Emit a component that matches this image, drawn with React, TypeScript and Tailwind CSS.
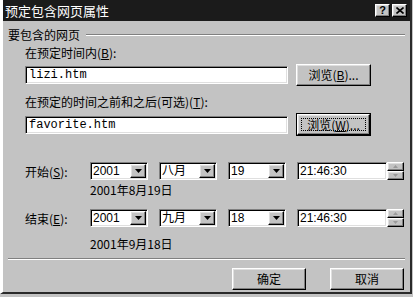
import type { ReactNode } from 'react'

const sunken =
  'border border-t-[#808080] border-l-[#808080] border-b-white border-r-white shadow-[inset_1px_1px_0_#000,inset_-1px_-1px_0_#dfdfdf]'
const raised =
  'border border-t-white border-l-white border-b-black border-r-black shadow-[inset_-1px_-1px_0_#808080,inset_1px_1px_0_#dfdfdf]'

function Label({ children, className = '' }: { children: ReactNode; className?: string }) {
  return <div className={`h-[13px] whitespace-nowrap text-[12px] leading-[13px] ${className}`}>{children}</div>
}

function DropArrow() {
  return (
    <svg width="7" height="4" viewBox="0 0 7 4">
      <path d="M0 0h7L3.5 4z" fill="#000" />
    </svg>
  )
}

function Combo({ value }: { value: string }) {
  return (
    <div className={`flex h-[18px] w-[58px] items-center bg-white ${sunken}`}>
      <span className="flex-1 pl-[2px] font-['Liberation_Sans','Noto_Sans_CJK_SC',sans-serif] text-[12px] leading-none">
        {value}
      </span>
      <div className={`mr-[1px] flex h-[14px] w-[16px] items-center justify-center bg-[#c3c3c3] ${raised}`}>
        <DropArrow />
      </div>
    </div>
  )
}

function TimeField({ value }: { value: string }) {
  return (
    <div className="flex items-center">
      <div className={`flex h-[18px] w-[90px] items-center bg-white pl-[2px] ${sunken}`}>
        <span className="font-['Liberation_Sans',sans-serif] text-[12px] leading-none">{value}</span>
      </div>
      <div className="flex h-[18px] w-[17px] flex-col">
        <div className={`flex h-[9px] items-center justify-center bg-[#c3c3c3] ${raised}`}>
          <svg width="5" height="3" viewBox="0 0 5 3">
            <path d="M2.5 0L5 3H0z" fill="#9a9a9a" />
          </svg>
        </div>
        <div className={`flex h-[9px] items-center justify-center bg-[#c3c3c3] ${raised}`}>
          <svg width="5" height="3" viewBox="0 0 5 3">
            <path d="M0 0h5L2.5 3z" fill="#9a9a9a" />
          </svg>
        </div>
      </div>
    </div>
  )
}

function DateRow({ label, keyChar, year, month, day, time }: { label: string; keyChar: string; year: string; month: string; day: string; time: string }) {
  return (
    <div className="flex h-[18px] items-center">
      <div className="w-[87px] shrink-0 whitespace-nowrap pl-[22px] text-[12px] leading-[13px]">
        {label}(<u>{keyChar}</u>):
      </div>
      <div className="flex items-center gap-[11px]">
        <Combo value={year} />
        <Combo value={month} />
        <Combo value={day} />
        <TimeField value={time} />
      </div>
    </div>
  )
}

function Button({ children, focused = false, className = '' }: { children: ReactNode; focused?: boolean; className?: string }) {
  if (focused) {
    return (
      <div className={`border border-black ${className}`}>
        <div className={`flex h-full items-stretch bg-[#c3c3c3] p-[3px] ${raised}`}>
          <div className="flex flex-1 items-center justify-center whitespace-nowrap border border-dotted border-black text-[12px] leading-none">
            {children}
          </div>
        </div>
      </div>
    )
  }
  return (
    <div className={`flex items-center justify-center whitespace-nowrap bg-[#c3c3c3] text-[12px] leading-none ${raised} ${className}`}>
      {children}
    </div>
  )
}

export default function App() {
  return (
    <div className="h-[297px] w-[413px] bg-[#c3c3c3] font-['Noto_Sans_CJK_SC','Noto_Sans',sans-serif] text-black">
      <div className="flex h-[294px] w-[412px] flex-col border-b-2 border-l-[3px] border-r-2 border-b-[#2a2a2a] border-l-white border-r-[#2a2a2a]">
        <div className="flex h-[21px] items-center bg-[#1b1b1b] pl-[2px] pr-[3px]">
          <span className="flex-1 text-[13px] leading-none text-white">预定包含网页属性</span>
          <div className="flex items-center gap-[2px]">
            <div className={`flex h-[13px] w-[15px] items-center justify-center bg-[#c3c3c3] font-['Liberation_Sans',sans-serif] text-[11px] font-bold leading-none ${raised}`}>
              ?
            </div>
            <div className={`flex h-[13px] w-[15px] items-center justify-center bg-[#c3c3c3] ${raised}`}>
              <svg width="8" height="7" viewBox="0 0 8 7">
                <path d="M0.5 0.5L7.5 6.5M7.5 0.5L0.5 6.5" stroke="#000" strokeWidth="1.6" />
              </svg>
            </div>
          </div>
        </div>

        <div className="mt-[7px] flex items-center pl-[5px] pr-[5px]">
          <Label>要包含的网页</Label>
          <div className="ml-[6px] mt-[1px] h-[2px] flex-1 border-b border-t border-b-white border-t-[#808080]" />
        </div>

        <Label className="mt-[5px] pl-[22px]">
          在预定时间内(<u>B</u>):
        </Label>
        <div className="mt-[5px] flex items-center pl-[22px]">
          <div className={`flex h-[18px] w-[263px] items-center bg-white pl-[3px] ${sunken}`}>
            <span className="font-['Liberation_Mono',monospace] text-[12px] leading-none">lizi.htm</span>
          </div>
          <Button className="ml-[8px] h-[22px] w-[75px]">
            浏览(<u>B</u>)...
          </Button>
        </div>

        <Label className="mt-[9px] pl-[22px]">
          在预定的时间之前和之后(可选)(<u>T</u>):
        </Label>
        <div className="mt-[5px] flex items-center pl-[22px]">
          <div className={`flex h-[18px] w-[263px] items-center bg-white pl-[3px] ${sunken}`}>
            <span className="font-['Liberation_Mono',monospace] text-[12px] leading-none">favorite.htm</span>
          </div>
          <Button focused className="ml-[8px] h-[23px] w-[75px]">
            浏览(<u>W</u>)...
          </Button>
        </div>

        <div className="mt-[26px]">
          <DateRow label="开始" keyChar="S" year="2001" month="八月" day="19" time="21:46:30" />
        </div>
        <Label className="mt-[3px] pl-[87px]">2001年8月19日</Label>

        <div className="mt-[13px]">
          <DateRow label="结束" keyChar="E" year="2001" month="九月" day="18" time="21:46:30" />
        </div>
        <Label className="mt-[10px] pl-[87px]">2001年9月18日</Label>

        <div className="mx-[5px] mt-[8px] h-[2px] border-b border-t border-b-white border-t-[#808080]" />

        <div className="mt-[8px] flex justify-end gap-[24px] pr-[6px]">
          <Button className="h-[22px] w-[74px]">确定</Button>
          <Button className="h-[22px] w-[74px]">取消</Button>
        </div>
      </div>
    </div>
  )
}
